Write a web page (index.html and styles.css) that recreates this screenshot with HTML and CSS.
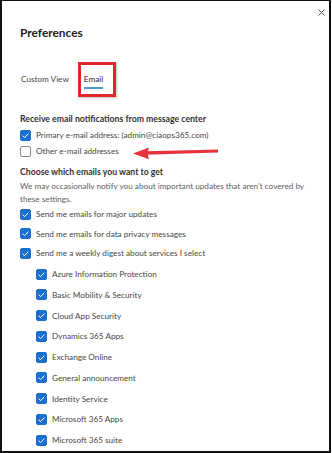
FILE: index.html
```html
<!DOCTYPE html>
<html lang="en">
<head>
<meta charset="utf-8">
<title>Preferences</title>
<link rel="stylesheet" href="styles.css">
</head>
<body>
<div class="panel">
  <header class="head">
    <h1 class="title">Preferences</h1>
    <button class="close" aria-label="Close">
      <svg width="7" height="7" viewBox="0 0 7 7"><path d="M0.5 0.5 L6.5 6.5 M6.5 0.5 L0.5 6.5" stroke="#605e5c" stroke-width="1" fill="none"/></svg>
    </button>
  </header>

  <nav class="tabs">
    <span class="tab">Custom View</span>
    <span class="tab active">Email</span>
  </nav>

  <h2 class="sect first">Receive email notifications from message center</h2>
  <div class="rows tight">
    <label class="row"><span class="cb on"><svg viewBox="0 0 11 11"><path d="M2.6 5.7 L4.6 7.6 L8.4 3.6"/></svg></span><span>Primary e-mail address: (admin@ciaops365.com)</span></label>
    <label class="row"><span class="cb"></span><span>Other e-mail addresses</span></label>
  </div>

  <h2 class="sect second">Choose which emails you want to get</h2>
  <p class="note">We may occasionally notify you about important updates that aren't covered by these settings.</p>

  <div class="rows top">
    <label class="row"><span class="cb on"><svg viewBox="0 0 11 11"><path d="M2.6 5.7 L4.6 7.6 L8.4 3.6"/></svg></span><span>Send me emails for major updates</span></label>
    <label class="row"><span class="cb on"><svg viewBox="0 0 11 11"><path d="M2.6 5.7 L4.6 7.6 L8.4 3.6"/></svg></span><span>Send me emails for data privacy messages</span></label>
    <label class="row"><span class="cb on"><svg viewBox="0 0 11 11"><path d="M2.6 5.7 L4.6 7.6 L8.4 3.6"/></svg></span><span>Send me a weekly digest about services I select</span></label>
  </div>
  <div class="rows sub">
    <label class="row"><span class="cb on"><svg viewBox="0 0 11 11"><path d="M2.6 5.7 L4.6 7.6 L8.4 3.6"/></svg></span><span>Azure Information Protection</span></label>
    <label class="row"><span class="cb on"><svg viewBox="0 0 11 11"><path d="M2.6 5.7 L4.6 7.6 L8.4 3.6"/></svg></span><span>Basic Mobility &amp; Security</span></label>
    <label class="row"><span class="cb on"><svg viewBox="0 0 11 11"><path d="M2.6 5.7 L4.6 7.6 L8.4 3.6"/></svg></span><span>Cloud App Security</span></label>
    <label class="row"><span class="cb on"><svg viewBox="0 0 11 11"><path d="M2.6 5.7 L4.6 7.6 L8.4 3.6"/></svg></span><span>Dynamics 365 Apps</span></label>
    <label class="row"><span class="cb on"><svg viewBox="0 0 11 11"><path d="M2.6 5.7 L4.6 7.6 L8.4 3.6"/></svg></span><span>Exchange Online</span></label>
    <label class="row"><span class="cb on"><svg viewBox="0 0 11 11"><path d="M2.6 5.7 L4.6 7.6 L8.4 3.6"/></svg></span><span>General announcement</span></label>
    <label class="row"><span class="cb on"><svg viewBox="0 0 11 11"><path d="M2.6 5.7 L4.6 7.6 L8.4 3.6"/></svg></span><span>Identity Service</span></label>
    <label class="row"><span class="cb on"><svg viewBox="0 0 11 11"><path d="M2.6 5.7 L4.6 7.6 L8.4 3.6"/></svg></span><span>Microsoft 365 Apps</span></label>
    <label class="row"><span class="cb on"><svg viewBox="0 0 11 11"><path d="M2.6 5.7 L4.6 7.6 L8.4 3.6"/></svg></span><span>Microsoft 365 suite</span></label>
  </div>

  <div class="callout-box"></div>
  <svg class="callout-arrow" width="92" height="20" viewBox="0 0 92 20">
    <path d="M16 8.2 L88 6.6 L88 9.6 L16 11.8 Z" fill="#e8333a"/>
    <path d="M3 10.5 L19 4.6 L17.5 10.2 L19 16.2 Z" fill="#e8333a"/>
  </svg>
</div>
</body>
</html>
```
FILE: styles.css
```css
* { box-sizing: border-box; }
html, body { margin: 0; padding: 0; background: #fff; }
body { width: 332px; height: 453px; overflow: hidden; }

.panel {
  position: relative;
  width: 331px;
  height: 453px;
  border-style: solid;
  border-color: #111;
  border-width: 1px 2px 2px 2px;
  padding: 5px 0 0 18px;
  font-family: Lato, "Liberation Sans", sans-serif;
  color: #3b3a39;
  font-size: 8.2px;
}

.head {
  display: flex;
  justify-content: space-between;
  align-items: flex-start;
}
.title {
  margin: 17px 0 0 0;
  font-size: 11.9px;
  line-height: 20px;
  font-weight: 700;
  color: #201f1e;
}
.close {
  width: 10px;
  height: 10px;
  margin: 1px 3px 0 0;
  padding: 0;
  border: 0;
  background: none;
  display: flex;
  align-items: center;
  justify-content: center;
}

.tabs {
  display: flex;
  gap: 15px;
  margin-top: 29px;
  padding-left: 1px;
}
.tab {
  line-height: 14px;
  padding-bottom: 1px;
  border-bottom: 2px solid transparent;
  color: #484644;
}
.tab.active {
  color: #201f1e;
  border-bottom-color: #4b98dc;
}

.sect {
  margin: 0;
  font-size: 8.7px;
  line-height: 12px;
  font-weight: 700;
  color: #323130;
}
.sect.first { margin-top: 24px; }
.sect.second { margin-top: 7px; }

.note {
  margin: 2px 0 0 0;
  line-height: 13px;
  width: 300px;
  color: #605e5c;
}

.rows { display: flex; flex-direction: column; }
.rows.tight { margin-top: 2px; gap: 0; }
.rows.top { gap: 3.5px; }
.rows.sub { gap: 4.75px; margin-top: 5px; padding-left: 16px; }

.row {
  display: flex;
  align-items: center;
  gap: 5px;
  height: 16px;
  line-height: 12px;
  color: #484644;
}
.cb {
  flex: none;
  width: 11px;
  height: 11px;
  border-radius: 2px;
  border: 1px solid #8a8886;
  background: #fff;
  display: flex;
}
.cb.on {
  background: #1a6fcf;
  border-color: #1a6fcf;
}
.cb svg {
  width: 11px;
  height: 11px;
  margin: -1px;
}
.cb svg path {
  fill: none;
  stroke: #fff;
  stroke-width: 1;
}

.callout-box {
  position: absolute;
  left: 76px;
  top: 61px;
  width: 38px;
  height: 35px;
  border: 3px solid #e2262d;
  box-shadow: 1px 1px 2px rgba(0,0,0,0.25);
}
.callout-arrow {
  position: absolute;
  left: 128px;
  top: 142px;
}
```
